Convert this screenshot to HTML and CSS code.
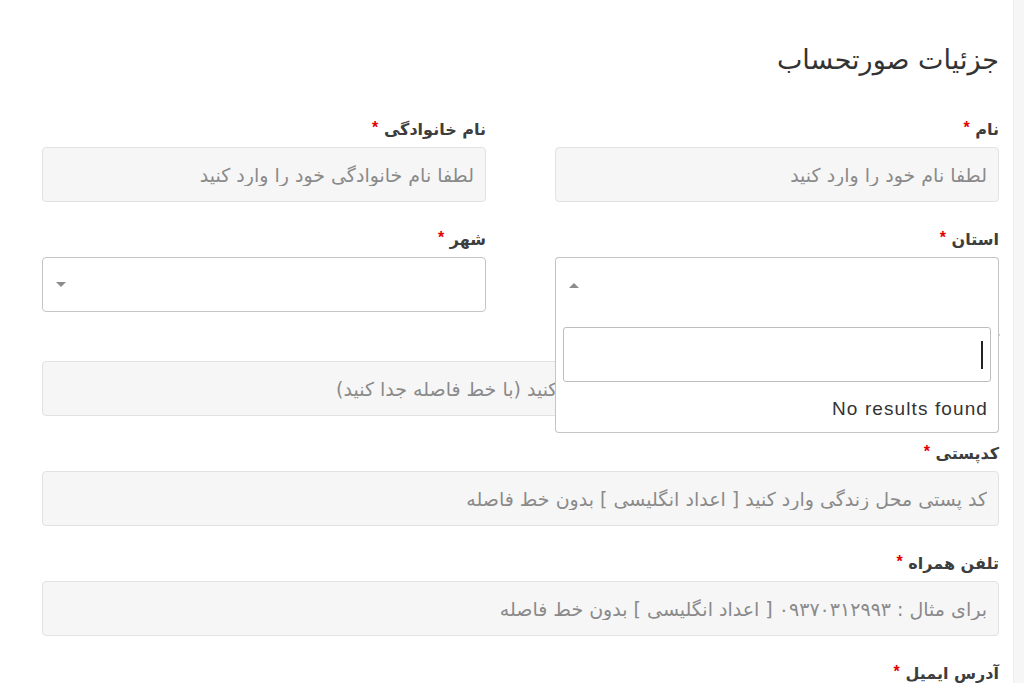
FILE: index.html
```html
<!DOCTYPE html>
<html lang="fa">
<head>
<meta charset="utf-8">
<title>جزئیات صورتحساب</title>
<link rel="stylesheet" href="styles.css">
</head>
<body>
<div class="page">
  <main class="content" dir="rtl">
    <h3 class="title">جزئیات صورتحساب</h3>

    <div class="row two">
      <div class="field">
        <label class="label">نام <span class="req">*</span></label>
        <input class="input" type="text" placeholder="لطفا نام خود را وارد کنید">
      </div>
      <div class="field">
        <label class="label">نام خانوادگی <span class="req">*</span></label>
        <input class="input" type="text" placeholder="لطفا نام خانوادگی خود را وارد کنید">
      </div>
    </div>

    <div class="row two tight">
      <div class="field">
        <label class="label">استان <span class="req">*</span></label>
        <div class="select open">
          <div class="selection"><span class="arrow up"></span></div>
          <div class="dropdown">
            <div class="search"><span class="caret"></span></div>
            <div class="results" dir="ltr">No results found</div>
          </div>
        </div>
      </div>
      <div class="field">
        <label class="label">شهر <span class="req">*</span></label>
        <div class="select">
          <div class="selection"><span class="arrow down"></span></div>
        </div>
      </div>
    </div>

    <div class="field">
      <label class="label">آدرس <span class="req">*</span></label>
      <input class="input" type="text" placeholder="لطفا آدرس دقیق و کامل محل سکونت خودتان را وارد کنید (با خط فاصله جدا کنید)">
    </div>

    <div class="field">
      <label class="label">کدپستی <span class="req">*</span></label>
      <input class="input" type="text" placeholder="کد پستی محل زندگی وارد کنید [ اعداد انگلیسی ] بدون خط فاصله">
    </div>

    <div class="field">
      <label class="label">تلفن همراه <span class="req">*</span></label>
      <input class="input" type="text" placeholder="برای مثال : ۰۹۳۷۰۳۱۲۹۹۳ [ اعداد انگلیسی ] بدون خط فاصله">
    </div>

    <div class="field">
      <label class="label">آدرس ایمیل <span class="req">*</span></label>
      <input class="input" type="text" placeholder="لطفا ایمیل خود را وارد کنید">
    </div>
  </main>
  <aside class="strip"></aside>
</div>
</body>
</html>
```

FILE: styles.css
```css
* { box-sizing: border-box; }

html, body {
  margin: 0;
  height: 100%;
  overflow: hidden;
  background: #ffffff;
}

body {
  font-family: "DejaVu Sans", "Noto Sans", sans-serif;
  color: #333333;
}

.page {
  display: flex;
  min-height: 100%;
}

.content {
  flex: 1;
  padding: 42px 14px 0 42px;
}

.strip {
  width: 11px;
  flex: none;
  background: #f6f6f6;
  border-left: 1px solid #eeeeee;
}

.title {
  margin: 0 0 38px;
  font-size: 27px;
  line-height: 36px;
  font-weight: normal;
  color: #333333;
}

.row.two {
  display: grid;
  grid-template-columns: 1fr 1fr;
  column-gap: 69px;
}

.field {
  margin-bottom: 24px;
}

.row.tight .field {
  margin-bottom: 18px;
}

.label {
  display: block;
  height: 24px;
  line-height: 24px;
  margin-bottom: 7px;
  font-size: 16px;
  font-weight: bold;
  color: #3d3d3d;
}

.req {
  color: #e20000;
  font-family: "Liberation Sans", sans-serif;
  font-size: 16px;
  vertical-align: 2px;
}

.input {
  display: block;
  width: 100%;
  height: 55px;
  padding: 0 11px;
  border: 1px solid #e2e2e2;
  border-radius: 4px;
  background: #f6f6f6;
  font-family: "DejaVu Sans", sans-serif;
  font-size: 19px;
  color: #555555;
  direction: rtl;
}

.input::placeholder {
  color: #8a8a8a;
  opacity: 1;
}

.select {
  position: relative;
}

.selection {
  height: 55px;
  border: 1px solid #c4c4c4;
  border-radius: 4px;
  background: #ffffff;
  display: flex;
  align-items: center;
  justify-content: flex-end;
  padding-left: 13px;
}

.arrow {
  width: 0;
  height: 0;
  border-left: 5px solid transparent;
  border-right: 5px solid transparent;
}

.arrow.down {
  border-top: 5px solid #8c8c8c;
}

.arrow.up {
  border-bottom: 5px solid #8c8c8c;
}

.select.open .selection {
  border-bottom: 0;
  border-radius: 4px 4px 0 0;
}

.dropdown {
  position: absolute;
  top: 100%;
  left: 0;
  right: 0;
  z-index: 5;
  background: #ffffff;
  border: 1px solid #c4c4c4;
  border-top: 0;
  border-radius: 0 0 4px 4px;
  padding: 15px 7px 0;
}

.search {
  height: 55px;
  border: 1px solid #bdbdbd;
  border-radius: 3px;
  display: flex;
  align-items: center;
  padding-right: 7px;
}

.caret {
  width: 2px;
  height: 28px;
  background: #222222;
}

.results {
  height: 50px;
  line-height: 54px;
  text-align: right;
  padding-right: 3px;
  font-family: "Liberation Sans", Arial, sans-serif;
  font-size: 19px;
  letter-spacing: 1.1px;
  color: #333333;
}
```
